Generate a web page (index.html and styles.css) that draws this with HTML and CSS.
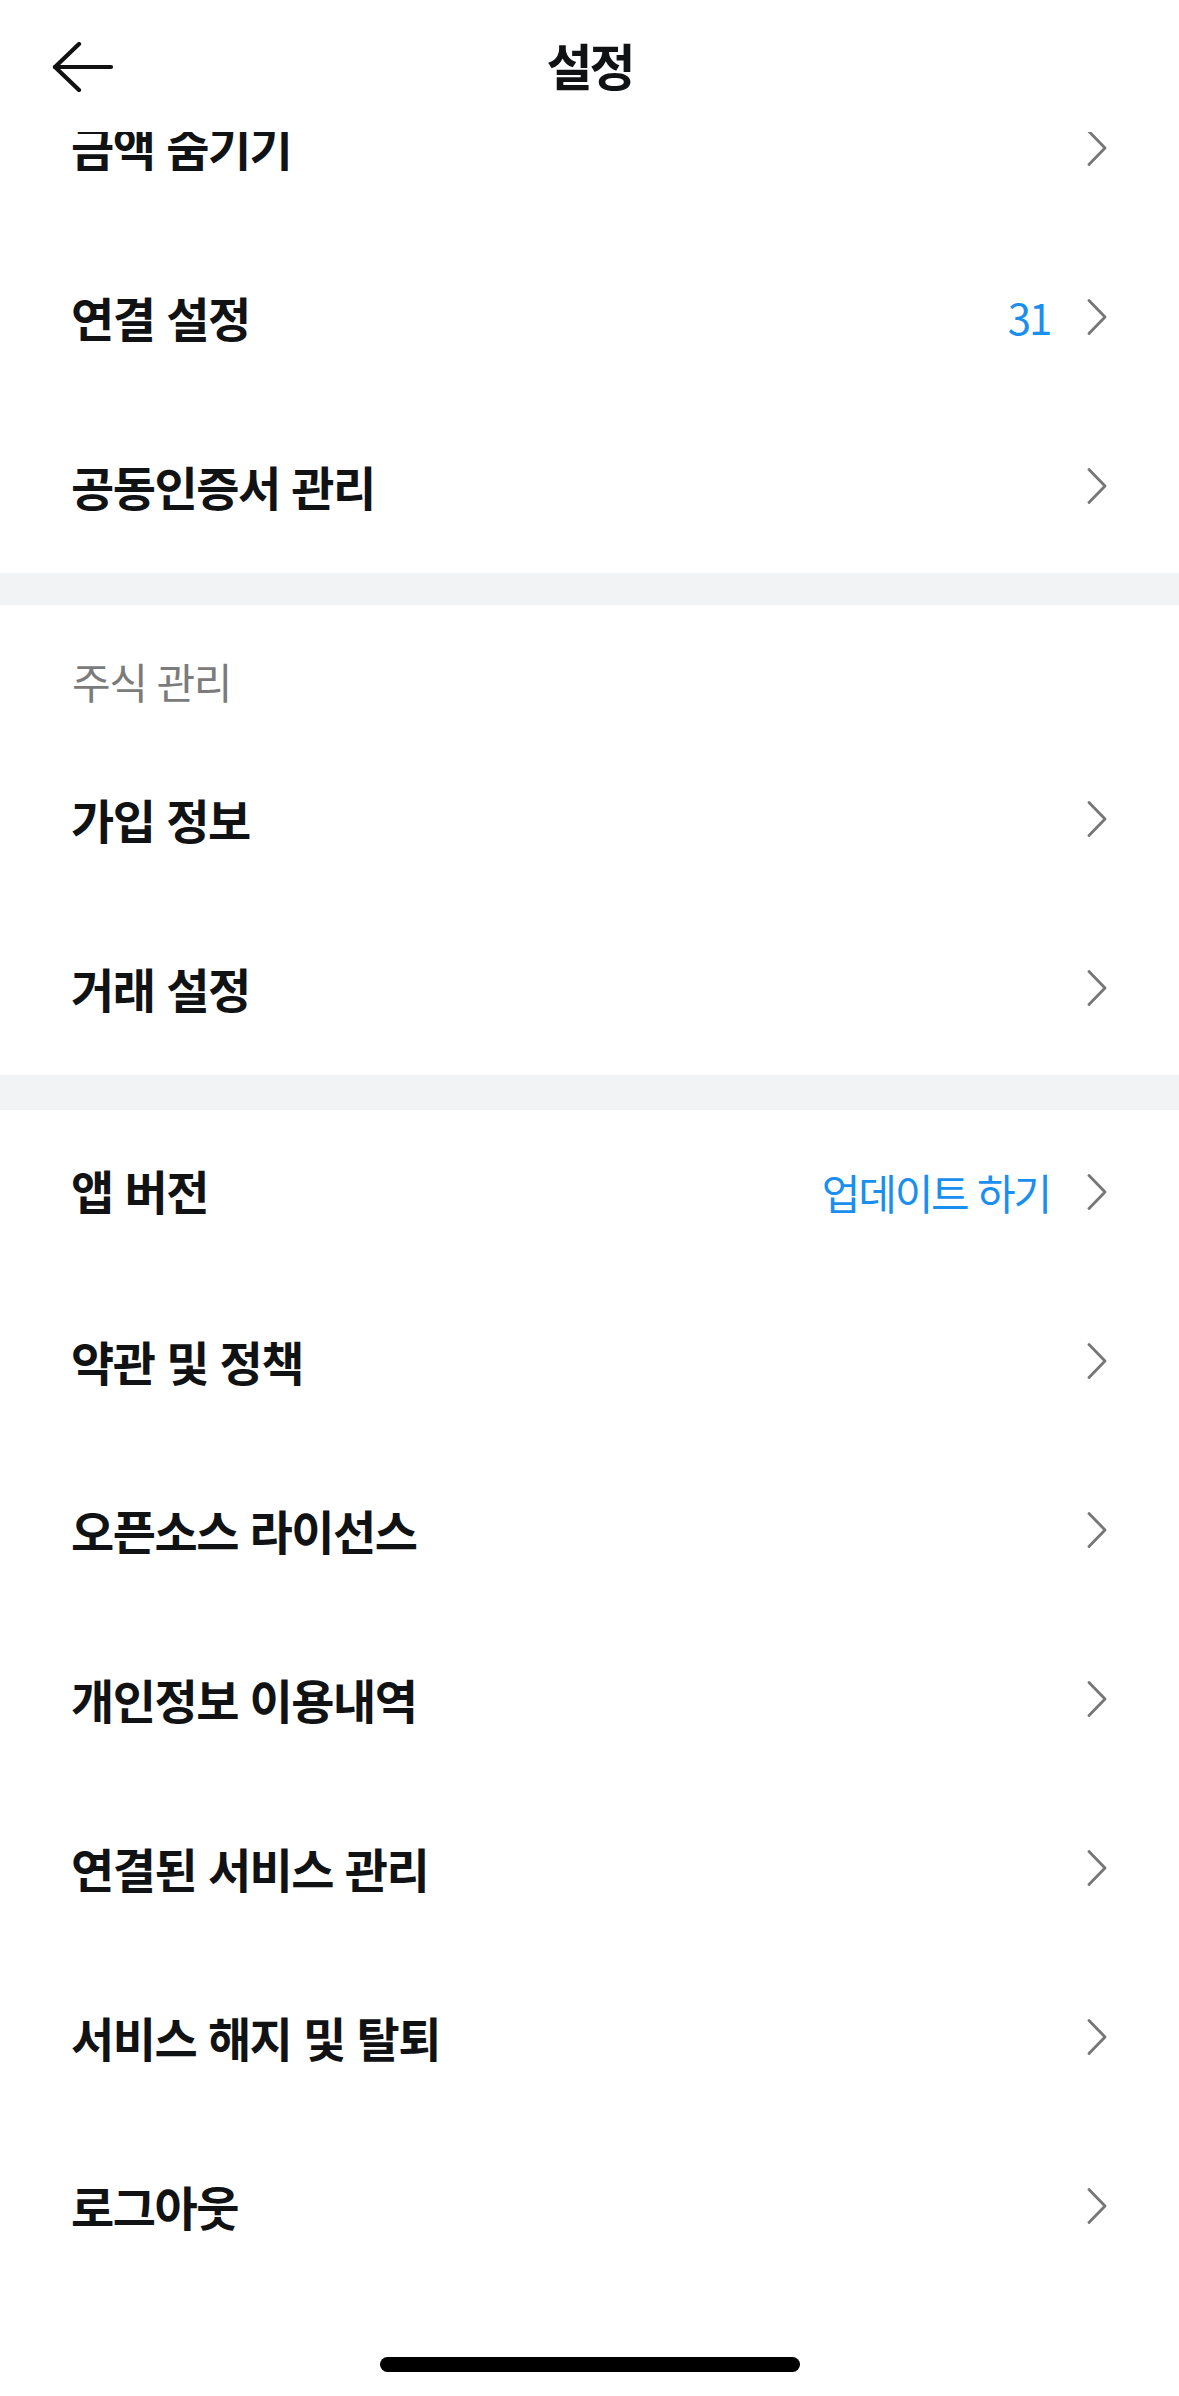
FILE: index.html
```html
<!DOCTYPE html>
<html lang="ko">
<head>
<meta charset="utf-8">
<title>설정</title>
<link rel="stylesheet" href="styles.css">
</head>
<body>
<div class="screen">
  <header class="topbar">
    <button class="back" aria-label="뒤로">
      <svg width="62" height="50" viewBox="0 0 62 50" fill="none" stroke="#111" stroke-width="4.2" stroke-linecap="round" stroke-linejoin="round">
        <path d="M3 25 H59"/>
        <path d="M27 2 L3 25 L27 48"/>
      </svg>
    </button>
    <h1 class="title">설정</h1>
  </header>

  <main class="viewport">
    <div class="scroller">
      <section class="group">
        <a class="row"><span class="label">금액 숨기기</span><span class="chev"></span></a>
        <a class="row"><span class="label">연결 설정</span><span class="value">31</span><span class="chev"></span></a>
        <a class="row"><span class="label">공동인증서 관리</span><span class="chev"></span></a>
      </section>
      <div class="divider"></div>
      <section class="group">
        <div class="group-title">주식 관리</div>
        <a class="row"><span class="label">가입 정보</span><span class="chev"></span></a>
        <a class="row"><span class="label">거래 설정</span><span class="chev"></span></a>
      </section>
      <div class="divider second"></div>
      <section class="group">
        <a class="row"><span class="label">앱 버전</span><span class="value">업데이트 하기</span><span class="chev"></span></a>
        <a class="row"><span class="label">약관 및 정책</span><span class="chev"></span></a>
        <a class="row"><span class="label">오픈소스 라이선스</span><span class="chev"></span></a>
        <a class="row"><span class="label">개인정보 이용내역</span><span class="chev"></span></a>
        <a class="row"><span class="label">연결된 서비스 관리</span><span class="chev"></span></a>
        <a class="row"><span class="label">서비스 해지 및 탈퇴</span><span class="chev"></span></a>
        <a class="row"><span class="label">로그아웃</span><span class="chev"></span></a>
      </section>
    </div>
  </main>
  <div class="home-indicator"></div>
</div>
</body>
</html>
```
FILE: styles.css
```css
* { box-sizing: border-box; }
html, body {
  margin: 0;
  padding: 0;
  background: #ffffff;
}
body {
  font-family: "Noto Sans CJK KR", "Noto Sans", sans-serif;
  color: #111214;
}
.screen {
  position: relative;
  width: 1179px;
  height: 2396px;
  overflow: hidden;
  display: flex;
  flex-direction: column;
  background: #fff;
}
.topbar {
  position: relative;
  height: 132px;
  flex: 0 0 132px;
  display: flex;
  align-items: center;
  justify-content: center;
  padding-bottom: 4px;
}
.back {
  position: absolute;
  left: 52px;
  top: 42px;
  padding: 0;
  margin: 0;
  border: 0;
  background: none;
  display: flex;
}
.title {
  margin: 0;
  font-size: 50px;
  font-weight: 700;
  line-height: 1;
  letter-spacing: -3px;
  color: #111214;
}
.viewport {
  flex: 1;
  overflow: hidden;
}
.scroller {
  margin-top: -66px;
}
.group {
  display: flex;
  flex-direction: column;
}
.row {
  height: 169px;
  display: flex;
  align-items: center;
  padding: 0 72px 6px 71px;
  text-decoration: none;
  color: #111214;
}
.row:first-child .label {
  position: relative;
  top: -2px;
}
.label {
  flex: 1;
  font-size: 47px;
  font-weight: 700;
  letter-spacing: -1.5px;
  line-height: 1;
}
.value {
  font-size: 42px;
  font-weight: 400;
  color: #1a8ff0;
  margin-right: 37px;
  letter-spacing: -2.2px;
  line-height: 1;
}
.chev {
  width: 20px;
  height: 36px;
  flex: 0 0 20px;
  background: no-repeat center / 20px 36px url("data:image/svg+xml,%3Csvg xmlns='http://www.w3.org/2000/svg' width='20' height='36' viewBox='0 0 20 36'%3E%3Cpath d='M2 1.5 L18 18 L2 34.5' fill='none' stroke='%23767676' stroke-width='2.8' stroke-linecap='round' stroke-linejoin='round'/%3E%3C/svg%3E");
}
.divider {
  height: 32px;
  background: #f2f3f5;
}
.divider.second {
  height: 35px;
}
.group-title {
  height: 132px;
  padding: 55px 0 0 72px;
  font-size: 42px;
  line-height: 42px;
  font-weight: 400;
  color: #7b7b7b;
  letter-spacing: -1.5px;
}
.home-indicator {
  position: absolute;
  left: 380px;
  bottom: 24px;
  width: 420px;
  height: 15px;
  border-radius: 8px;
  background: #000;
}
```
